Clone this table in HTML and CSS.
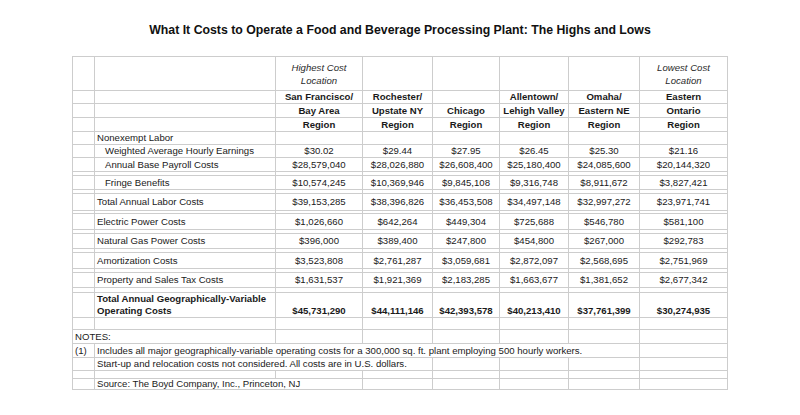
FILE: index.html
```html
<!DOCTYPE html>
<html lang="en">
<head>
<meta charset="utf-8">
<title>Food and Beverage Processing Plant Costs</title>
<link rel="stylesheet" href="styles.css">
</head>
<body>
<h1 class="title">What It Costs to Operate a Food and Beverage Processing Plant: The Highs and Lows</h1>
<table class="sheet">
  <colgroup>
    <col class="w22"><col class="w181"><col class="w87"><col class="w70"><col class="w67"><col class="w69"><col class="w71"><col class="w88">
  </colgroup>
  <tr class="r34">
    <td></td><td></td><td class="it">Highest Cost<br>Location</td><td></td><td></td><td></td><td></td><td class="it">Lowest Cost<br>Location</td>
  </tr>
  <tr class="r13 b">
    <td></td><td></td><td>San Francisco/</td><td>Rochester/</td><td></td><td>Allentown/</td><td>Omaha/</td><td>Eastern</td>
  </tr>
  <tr class="r14 b">
    <td></td><td></td><td>Bay Area</td><td>Upstate NY</td><td>Chicago</td><td>Lehigh Valley</td><td>Eastern NE</td><td>Ontario</td>
  </tr>
  <tr class="r14 b">
    <td></td><td></td><td>Region</td><td>Region</td><td>Region</td><td>Region</td><td>Region</td><td>Region</td>
  </tr>
  <tr class="r13">
    <td></td><td class="lbl">Nonexempt Labor</td><td></td><td></td><td></td><td></td><td></td><td></td>
  </tr>
  <tr class="r13">
    <td></td><td class="lbl ind">Weighted Average Hourly Earnings</td><td>$30.02</td><td>$29.44</td><td>$27.95</td><td>$26.45</td><td>$25.30</td><td>$21.16</td>
  </tr>
  <tr class="r14">
    <td></td><td class="lbl ind">Annual Base Payroll Costs</td><td>$28,579,040</td><td>$28,026,880</td><td>$26,608,400</td><td>$25,180,400</td><td>$24,085,600</td><td>$20,144,320</td>
  </tr>
  <tr class="s4"><td></td><td></td><td></td><td></td><td></td><td></td><td></td><td></td></tr>
  <tr class="r14">
    <td></td><td class="lbl ind">Fringe Benefits</td><td>$10,574,245</td><td>$10,369,946</td><td>$9,845,108</td><td>$9,316,748</td><td>$8,911,672</td><td>$3,827,421</td>
  </tr>
  <tr class="s4"><td></td><td></td><td></td><td></td><td></td><td></td><td></td><td></td></tr>
  <tr class="r17">
    <td></td><td class="lbl">Total Annual Labor Costs</td><td>$39,153,285</td><td>$38,396,826</td><td>$36,453,508</td><td>$34,497,148</td><td>$32,997,272</td><td>$23,971,741</td>
  </tr>
  <tr class="s3"><td></td><td></td><td></td><td></td><td></td><td></td><td></td><td></td></tr>
  <tr class="r16">
    <td></td><td class="lbl">Electric Power Costs</td><td>$1,026,660</td><td>$642,264</td><td>$449,304</td><td>$725,688</td><td>$546,780</td><td>$581,100</td>
  </tr>
  <tr class="s4"><td></td><td></td><td></td><td></td><td></td><td></td><td></td><td></td></tr>
  <tr class="r15">
    <td></td><td class="lbl">Natural Gas Power Costs</td><td>$396,000</td><td>$389,400</td><td>$247,800</td><td>$454,800</td><td>$267,000</td><td>$292,783</td>
  </tr>
  <tr class="s4"><td></td><td></td><td></td><td></td><td></td><td></td><td></td><td></td></tr>
  <tr class="r16">
    <td></td><td class="lbl">Amortization Costs</td><td>$3,523,808</td><td>$2,761,287</td><td>$3,059,681</td><td>$2,872,097</td><td>$2,568,695</td><td>$2,751,969</td>
  </tr>
  <tr class="s4"><td></td><td></td><td></td><td></td><td></td><td></td><td></td><td></td></tr>
  <tr class="r15">
    <td></td><td class="lbl">Property and Sales Tax Costs</td><td>$1,631,537</td><td>$1,921,369</td><td>$2,183,285</td><td>$1,663,677</td><td>$1,381,652</td><td>$2,677,342</td>
  </tr>
  <tr class="s5"><td></td><td></td><td></td><td></td><td></td><td></td><td></td><td></td></tr>
  <tr class="r25 b bot">
    <td></td><td class="lbl">Total Annual Geographically-Variable<br>Operating Costs</td><td>$45,731,290</td><td>$44,111,146</td><td>$42,393,578</td><td>$40,213,410</td><td>$37,761,399</td><td>$30,274,935</td>
  </tr>
  <tr class="r12"><td></td><td></td><td></td><td></td><td></td><td></td><td></td><td></td></tr>
  <tr class="r14">
    <td colspan="2" class="note">NOTES:</td><td></td><td></td><td></td><td></td><td></td><td></td>
  </tr>
  <tr class="r14">
    <td class="note">(1)</td><td colspan="6" class="lbl">Includes all major geographically-variable operating costs for a 300,000 sq. ft. plant employing 500 hourly workers.</td><td></td>
  </tr>
  <tr class="r13">
    <td></td><td colspan="3" class="lbl">Start-up and relocation costs not considered. All costs are in U.S. dollars.</td><td></td><td></td><td></td><td></td>
  </tr>
  <tr class="s8"><td></td><td></td><td></td><td></td><td></td><td></td><td></td><td></td></tr>
  <tr class="r11">
    <td></td><td colspan="2" class="lbl">Source: The Boyd Company, Inc., Princeton, NJ</td><td></td><td></td><td></td><td></td><td></td>
  </tr>
</table>
</body>
</html>
```
FILE: styles.css
```css
html, body {
  margin: 0;
  padding: 0;
  background: #ffffff;
}

body {
  font-family: "Liberation Sans", Arial, sans-serif;
  color: #1a1a1a;
}

.title {
  margin: 23px 0 0;
  font-size: 12.3px;
  line-height: 14px;
  font-weight: bold;
  text-align: center;
  color: #111;
}

.sheet {
  margin: 19px auto 0;
  width: 656px;
  table-layout: fixed;
  border-collapse: separate;
  border-spacing: 0;
  border-right: 1px solid #cdcdcd;
  border-bottom: 1px solid #cdcdcd;
}

.w22 { width: 22px; }
.w181 { width: 181px; }
.w87 { width: 87px; }
.w70 { width: 70px; }
.w67 { width: 67px; }
.w69 { width: 69px; }
.w71 { width: 71px; }
.w88 { width: 88px; }

.sheet td {
  border-left: 1px solid #cdcdcd;
  border-top: 1px solid #cdcdcd;
  padding: 0;
  font-size: 9.6px;
  line-height: 12px;
  text-align: center;
  vertical-align: middle;
  white-space: nowrap;
  overflow: visible;
}

.r34 { height: 34px; }
.r25 { height: 25px; }
.r17 { height: 17px; }
.r16 { height: 16px; }
.r15 { height: 15px; }
.r14 { height: 14px; }
.r13 { height: 13px; }
.r12 { height: 12px; }
.r11 { height: 11px; }
.s3 { height: 3px; }
.s4 { height: 4px; }
.s5 { height: 5px; }
.s8 { height: 8px; }

.r11 td { line-height: 10px; }

.sheet .it {
  font-style: italic;
  line-height: 13px;
  color: #2a2a2a;
}

.b td { font-weight: bold; }

.bot td { vertical-align: bottom; }
.bot td.lbl { vertical-align: middle; }

.sheet .lbl {
  text-align: left;
  padding-left: 2px;
}

.sheet .ind { padding-left: 10px; }

.sheet .note {
  text-align: left;
  padding-left: 2px;
}
```
